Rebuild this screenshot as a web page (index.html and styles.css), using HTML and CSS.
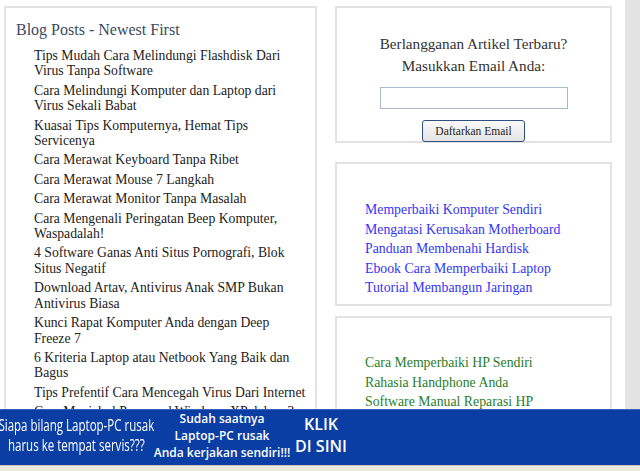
FILE: index.html
```html
<!DOCTYPE html>
<html>
<head>
    <title>Blog</title>
    <link rel="stylesheet" href="styles.css">
</head>
<body>
    <div class="page">
        <div class="main">
            <div class="box posts">
                <h2>Blog Posts - Newest First</h2>
                <ul>
                    <li>Tips Mudah Cara Melindungi Flashdisk Dari Virus Tanpa Software</li>
                    <li>Cara Melindungi Komputer dan Laptop dari Virus Sekali Babat</li>
                    <li>Kuasai Tips Komputernya, Hemat Tips Servicenya</li>
                    <li>Cara Merawat Keyboard Tanpa Ribet</li>
                    <li>Cara Merawat Mouse 7 Langkah</li>
                    <li>Cara Merawat Monitor Tanpa Masalah</li>
                    <li>Cara Mengenali Peringatan Beep Komputer, Waspadalah!</li>
                    <li>4 Software Ganas Anti Situs Pornografi, Blok Situs Negatif</li>
                    <li>Download Artav, Antivirus Anak SMP Bukan Antivirus Biasa</li>
                    <li>Kunci Rapat Komputer Anda dengan Deep Freeze 7</li>
                    <li>6 Kriteria Laptop atau Netbook Yang Baik dan Bagus</li>
                    <li>Tips Prefentif Cara Mencegah Virus Dari Internet</li>
                    <li>Cara Menjebol Password Windows XP dalam 3 Menit</li>
                </ul>
            </div>
        </div>
        <div class="side">
            <div class="box subscribe">
                <p>Berlangganan Artikel Terbaru?<br>Masukkan Email Anda:</p>
                <input type="text" class="email">
                <button class="submit">Daftarkan Email</button>
            </div>
            <div class="box links blue">
                <a href="#">Memperbaiki Komputer Sendiri</a>
                <a href="#">Mengatasi Kerusakan Motherboard</a>
                <a href="#">Panduan Membenahi Hardisk</a>
                <a href="#">Ebook Cara Memperbaiki Laptop</a>
                <a href="#">Tutorial Membangun Jaringan</a>
            </div>
            <div class="box links green">
                <a href="#">Cara Memperbaiki HP Sendiri</a>
                <a href="#">Rahasia Handphone Anda</a>
                <a href="#">Software Manual Reparasi HP</a>
                <a href="#">Belajar Servis Ponsel</a>
            </div>
        </div>
        <div class="strip"></div>
    </div>

    <div class="banner">
        <div class="ad-left">
            <span>Siapa bilang Laptop-PC rusak</span>
            <span>harus ke tempat servis???</span>
        </div>
        <div class="ad-mid">Sudah saatnya<br>Laptop-PC rusak<br>Anda kerjakan sendiri!!!</div>
        <div class="ad-right">KLIK<br>DI SINI</div>
    </div>
    <div class="statusbar"></div>
</body>
</html>
```

FILE: styles.css
```css
* {
    margin: 0;
    padding: 0;
    box-sizing: border-box;
}

body {
    background: #fff;
    font-family: "Liberation Serif", "DejaVu Serif", serif;
    color: #222;
    overflow: hidden;
    height: 471px;
}

.page {
    display: flex;
    align-items: flex-start;
    padding-top: 6px;
}

.box {
    background: #fff;
    border: 2px solid #e2e2e2;
}

.main {
    margin-left: 4px;
    width: 313px;
}

.posts {
    padding: 13px 0 0 10px;
    height: 480px;
}

.posts h2 {
    font-weight: normal;
    font-size: 16px;
    color: #3b4a5e;
    margin-bottom: 9px;
}

.posts ul {
    list-style: none;
    margin-left: 18px;
    width: 272px;
}

.posts li {
    font-size: 13.7px;
    line-height: 15.4px;
    margin-bottom: 4px;
    color: #222;
}

.side {
    margin-left: 18px;
    width: 277px;
    display: flex;
    flex-direction: column;
    gap: 18px;
}

.subscribe {
    height: 137px;
    text-align: center;
    padding-top: 25px;
}

.subscribe p {
    font-size: 15.2px;
    line-height: 22px;
    color: #333;
}

.email {
    display: block;
    margin: 10px auto 0;
    width: 188px;
    height: 22px;
    border: 1px solid #a9b8cc;
}

.submit {
    margin-top: 11px;
    width: 103px;
    height: 22px;
    font-family: "Liberation Serif", serif;
    font-size: 11.5px;
    background: linear-gradient(#fafafa, #e4e4e4);
    border: 1px solid #2f4f7f;
    border-radius: 3px;
    color: #222;
}

.links {
    display: flex;
    flex-direction: column;
    padding: 39px 0 0 28px;
    gap: 5px;
}

.links a {
    font-size: 13.8px;
    line-height: 14.5px;
    text-decoration: none;
    white-space: nowrap;
}

.blue {
    height: 144px;
    margin-top: 1px;
}

.blue a {
    color: #3434f6;
}

.green {
    margin-top: -8px;
    height: 160px;
    padding-top: 38px;
}

.green a {
    color: #2a7d2a;
}

.strip {
    margin-left: 13px;
    width: 15px;
    height: 471px;
    margin-top: -6px;
    background: #e3e3e3;
}

.banner {
    position: fixed;
    left: 0;
    right: 0;
    top: 409px;
    height: 56px;
    background: #0a3ea4;
    border-top: 1px solid #3a62b8;
    color: #fff;
    display: flex;
    align-items: center;
    font-family: "Open Sans", "Liberation Sans", sans-serif;
    white-space: nowrap;
}

.ad-left {
    width: 212px;
    margin-right: -60px;
    display: flex;
    flex-direction: column;
    align-items: center;
    font-size: 16px;
    line-height: 20px;
    margin-top: -6px;
    transform: scaleX(0.72);
    transform-origin: left center;
}

.ad-mid {
    width: 140px;
    text-align: center;
    font-size: 12px;
    font-weight: 600;
    line-height: 17px;
    margin-top: -4px;
}

.ad-right {
    width: 58px;
    text-align: center;
    font-size: 16px;
    font-weight: 600;
    line-height: 22px;
    margin-top: -6px;
}

.statusbar {
    position: fixed;
    left: 0;
    right: 0;
    bottom: 0;
    height: 6px;
    background: #ede9dc;
    border-top: 1px solid #c9c4b4;
}
```
